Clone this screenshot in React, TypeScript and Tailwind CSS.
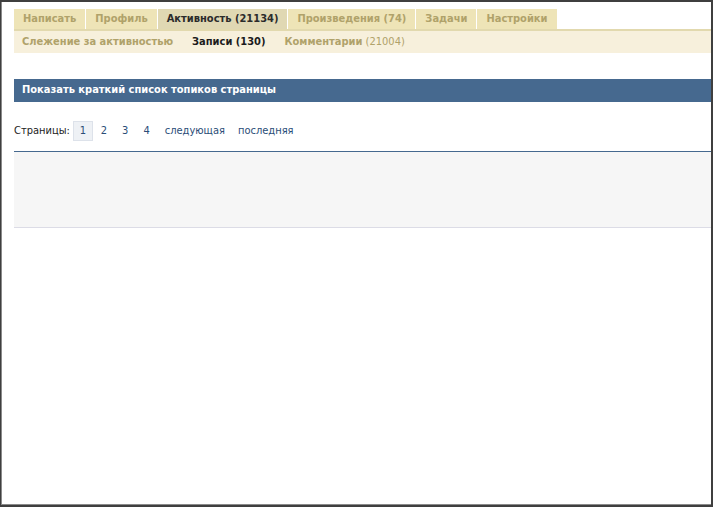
import React from "react";

const tabs = [
  { label: "Написать", active: false },
  { label: "Профиль", active: false },
  { label: "Активность (21134)", active: true },
  { label: "Произведения (74)", active: false },
  { label: "Задачи", active: false },
  { label: "Настройки", active: false },
];

export default function App() {
  return (
    <div
      className="w-[713px] h-[507px] bg-[#3f3f3f] p-[2px] pl-[1px] pt-[2px] box-border"
      style={{ fontFamily: "Tahoma, 'DejaVu Sans Condensed', 'DejaVu Sans', sans-serif" }}
    >
      <div className="w-full h-full bg-white border-l border-b border-[#8a8a8a] flex flex-col overflow-hidden">
        <div className="pt-[7px] pl-[12px]">
          <div className="flex gap-px">
            {tabs.map((t) => (
              <div
                key={t.label}
                className={`h-[20px] px-[9px] flex items-center text-[11px] font-bold whitespace-nowrap ${
                  t.active ? "bg-[#e0d8b3] text-[#2b2b2b]" : "bg-[#eee4b7] text-[#b0a26a]"
                }`}
              >
                {t.label}
              </div>
            ))}
          </div>
          <div className="h-[2px] bg-[#e2d9ae]" />
          <div className="h-[22px] bg-[#f7f0dc] flex items-center pl-[8px] pt-px gap-[19px] text-[11px] whitespace-nowrap">
            <span className="font-bold text-[#b0a26a]">Слежение за активностью</span>
            <span className="font-bold text-[#1c1c1c]">Записи (130)</span>
            <span className="text-[#b0a26a]">
              <span className="font-bold">Комментарии</span> (21004)
            </span>
          </div>
          <div className="mt-[26px] h-[23px] bg-[#46698f] flex items-center pl-[8px] text-[11px] font-bold text-white whitespace-nowrap">
            Показать краткий список топиков страницы
          </div>
          <div className="mt-[19px] h-[20px] flex items-center text-[11px] whitespace-nowrap">
            <span className="text-[#222]">Страницы:</span>
            <span className="ml-[3px] w-[20px] h-[20px] flex items-center justify-center bg-[#eef1f5] border border-[#dde2ea] text-[#2a4d77]">
              1
            </span>
            <span className="ml-[8px] text-[#2a4d77]">2</span>
            <span className="ml-[15px] text-[#2a4d77]">3</span>
            <span className="ml-[15px] text-[#2a4d77]">4</span>
            <span className="ml-[15px] text-[#2a4d77]">следующая</span>
            <span className="ml-[13px] text-[#2a4d77]">последняя</span>
          </div>
          <div className="mt-[10px] h-[77px] bg-[#f6f6f6] border-t border-[#46698f] border-b border-b-[#dcdce6]" />
        </div>
      </div>
    </div>
  );
}
